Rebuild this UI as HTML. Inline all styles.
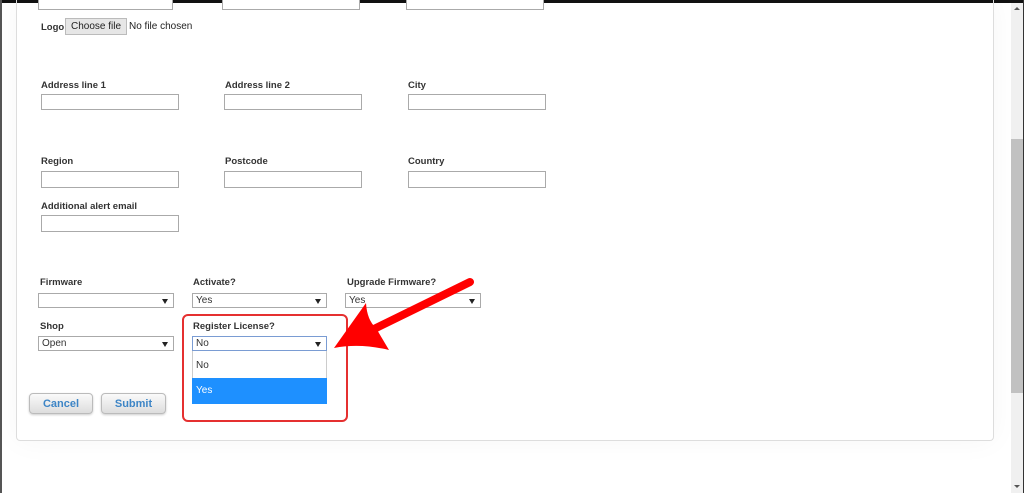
<!DOCTYPE html><html><head><style>
body{margin:0;width:1024px;height:493px;overflow:hidden;background:#fff;font-family:"Liberation Sans",Arial,sans-serif;position:relative}
.a{position:absolute}
.lbl{position:absolute;font-size:9.5px;font-weight:bold;color:#333}
.in{position:absolute;height:16px;border:1px solid #aaa;background:#fff;box-sizing:border-box}
.sel{position:absolute;height:15px;border:1px solid #aaa;background:#fff;box-sizing:border-box;font-size:10px;color:#333;padding-left:3px;line-height:13px}
.sel:after{content:"";position:absolute;right:5px;top:5px;border-left:3px solid transparent;border-right:3px solid transparent;border-top:5px solid #222}
.btn{position:absolute;height:21px;border:1px solid #bbb;border-radius:4px;background:linear-gradient(#fafafa,#ddd);color:#3d85c6;font-weight:bold;font-size:11px;text-align:center;line-height:20px;box-sizing:border-box;box-shadow:0 1px 2px rgba(0,0,0,.2)}
</style></head><body>
<div class="a" style="left:0;top:0;width:1024px;height:3px;background:#111"></div>
<div class="a" style="left:0;top:0;width:2px;height:493px;background:#555"></div>
<div class="a" style="left:16px;top:-2px;width:978px;height:443px;border:1px solid #ddd;border-top:none;border-radius:0 0 4px 4px;box-sizing:border-box;box-shadow:0 0 30px rgba(0,0,0,.04)"></div>
<div class="a" style="left:1011px;top:3px;width:12px;height:490px;background:#f0f0f0"></div>
<div class="a" style="left:1011px;top:139px;width:12px;height:254px;background:#c1c1c1"></div>
<div class="a" style="left:1023px;top:0;width:1px;height:493px;background:#333"></div>
<div class="a" style="left:1014px;top:7px;border-left:3px solid transparent;border-right:3px solid transparent;border-bottom:3px solid #555"></div>
<div class="a" style="left:1014px;top:485px;border-left:3px solid transparent;border-right:3px solid transparent;border-top:3px solid #555"></div>

<div class="in" style="left:38px;top:-6px;width:135px"></div>
<div class="in" style="left:222px;top:-6px;width:138px"></div>
<div class="in" style="left:406px;top:-6px;width:138px"></div>

<div class="lbl" style="left:41px;top:22px">Logo</div>
<div class="a" style="left:65px;top:18px;width:62px;height:17px;background:#e6e6e6;border:1px solid #bbb;box-sizing:border-box;font-size:10px;color:#222;text-align:center;line-height:15px">Choose file</div>
<div class="a" style="left:129px;top:21px;font-size:10px;color:#222">No file chosen</div>

<div class="lbl" style="left:41px;top:80px">Address line 1</div>
<div class="lbl" style="left:225px;top:80px">Address line 2</div>
<div class="lbl" style="left:408px;top:80px">City</div>
<div class="in" style="left:41px;top:94px;width:138px"></div>
<div class="in" style="left:224px;top:94px;width:138px"></div>
<div class="in" style="left:408px;top:94px;width:138px"></div>

<div class="lbl" style="left:41px;top:156px">Region</div>
<div class="lbl" style="left:225px;top:156px">Postcode</div>
<div class="lbl" style="left:408px;top:156px">Country</div>
<div class="in" style="left:41px;top:171px;width:138px;height:17px"></div>
<div class="in" style="left:224px;top:171px;width:138px;height:17px"></div>
<div class="in" style="left:408px;top:171px;width:138px;height:17px"></div>

<div class="lbl" style="left:41px;top:201px">Additional alert email</div>
<div class="in" style="left:41px;top:215px;width:138px;height:17px"></div>

<div class="lbl" style="left:40px;top:277px">Firmware</div>
<div class="lbl" style="left:193px;top:277px">Activate?</div>
<div class="lbl" style="left:347px;top:277px">Upgrade Firmware?</div>
<div class="sel" style="left:38px;top:293px;width:136px"></div>
<div class="sel" style="left:192px;top:293px;width:135px">Yes</div>
<div class="sel" style="left:345px;top:293px;width:136px">Yes</div>

<div class="lbl" style="left:40px;top:321px">Shop</div>
<div class="lbl" style="left:193px;top:321px">Register License?</div>
<div class="sel" style="left:38px;top:336px;width:136px">Open</div>
<div class="sel" style="left:192px;top:336px;width:135px;border-color:#7a9cd3">No</div>
<div class="a" style="left:192px;top:351px;width:135px;height:53px;border:1px solid #ccc;border-top:none;box-sizing:border-box;background:#fff"></div>
<div class="a" style="left:196px;top:360px;font-size:10px;color:#333">No</div>
<div class="a" style="left:192px;top:378px;width:135px;height:26px;background:#1e90ff;color:#fff;font-size:10px;line-height:26px;padding-left:4px;box-sizing:border-box">Yes</div>
<div class="a" style="left:182px;top:314px;width:166px;height:108px;border:2px solid #e53030;border-radius:6px;box-sizing:border-box"></div>

<div class="btn" style="left:29px;top:393px;width:64px">Cancel</div>
<div class="btn" style="left:101px;top:393px;width:65px">Submit</div>

<svg class="a" style="left:0;top:0" width="1024" height="493">
<line x1="470" y1="282" x2="372" y2="330" stroke="#f00" stroke-width="8" stroke-linecap="round"/>
<path d="M334,348 L366,303 Q367,320 376,328 Q383,340 389,350 Q360,343 334,348 Z" fill="#f00"/>
</svg>
</body></html>
